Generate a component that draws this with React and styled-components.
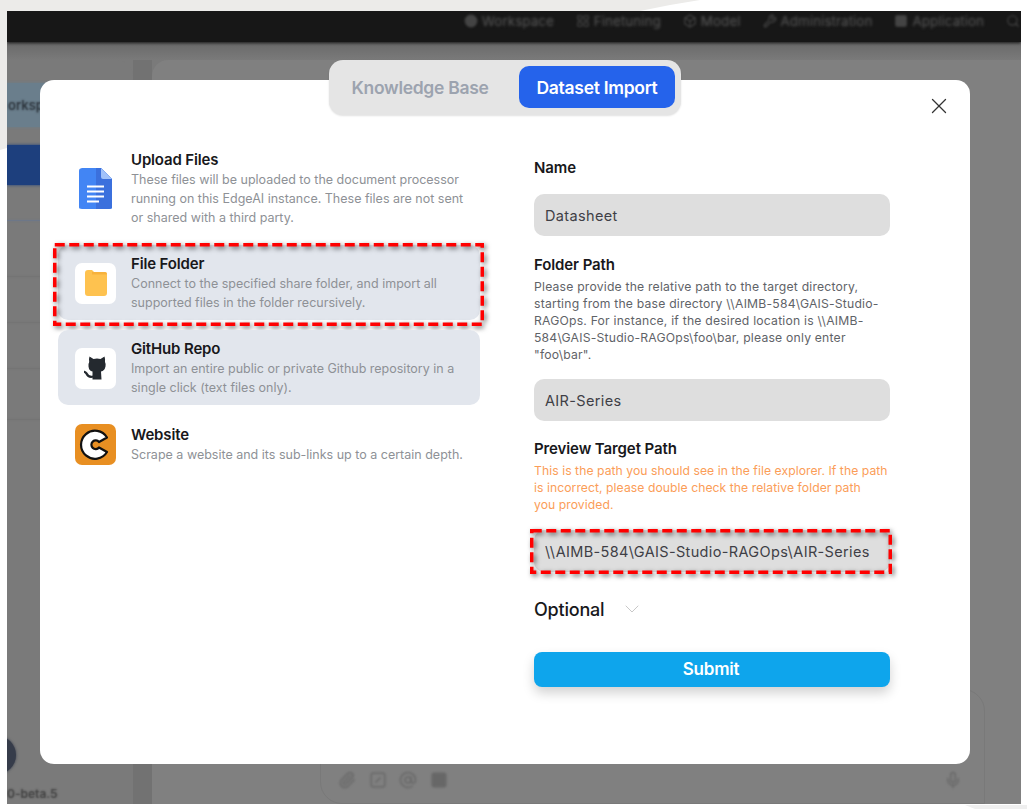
import React from 'react';
import styled, { createGlobalStyle } from 'styled-components';
import { X, ChevronDown, Search, LayoutGrid, Box, Wrench, Paperclip, SquareSlash, AtSign, Mic, Circle, Square } from 'lucide-react';

const GlobalStyle = createGlobalStyle`
    html, body {
        margin: 0;
        padding: 0;
        background: #fff;
        font-family: "Inter", "Liberation Sans", sans-serif;
    }
    * { box-sizing: border-box; }
`;

const Page = styled.div`
    position: relative;
    width: 1027px;
    height: 809px;
    padding: 11px 6px 5px 7px;
    overflow: hidden;
`;

// the torn grey paper behind the screenshot
const PaperScraps = styled.svg`
    position: absolute;
    left: 0;
    top: 0;
`;

const Frame = styled.div`
    position: relative;
    width: 1014px;
    height: 793px;
    overflow: hidden;
    background: #7f7f7f;
`;

// blurred page behind the dialog, the softness comes from shadows on each part
const Backdrop = styled.div`
    display: flex;
    flex-direction: column;
    height: 100%;
`;

const TopBar = styled.div`
    position: relative;
    flex: none;
    height: 31px;
    background: #171717;
    box-shadow: 0 1px 3px #171717;
    display: flex;
    justify-content: flex-end;
    align-items: flex-start;
    gap: 22px;
    padding: 2px 1px 0 0;
    font-size: 13.5px;
`;

const NavItem = styled.div`
    display: flex;
    align-items: center;
    gap: 4px;
    height: 16px;
    color: transparent;
    text-shadow: 0 0 3px #585858;
    svg { width: 14px; height: 14px; color: #444; filter: blur(1px); }
`;

const BackdropBody = styled.div`
    flex: 1;
    display: flex;
    background: linear-gradient(#696969 0, #7a7a7a 18px);
    min-height: 0;
`;

const Sidebar = styled.div`
    width: 126px;
    margin-top: 18px;
    border-top-right-radius: 16px;
    background: #7a7a7a;
    display: flex;
    flex-direction: column;
`;

const WorkspaceStrip = styled.div`
    height: 44px;
    margin-top: 23px;
    background: #6a7e8c;
    box-shadow: 0 0 3px #6a7e8c;
    color: transparent;
    text-shadow: 0 0 2px #2c343c;
    font-size: 13px;
    font-weight: 600;
    line-height: 44px;
    white-space: nowrap;
    padding-left: 1px;
`;

const BlueStrip = styled.div`
    height: 40px;
    margin-top: 18px;
    background: #1d3f7d;
    box-shadow: 0 0 3px #1d3f7d;
`;

const SideLine = styled.div`
    height: 1px;
    margin-top: ${p => p.$gap}px;
    background: ${p => p.$color || '#747474'};
    box-shadow: 0 0 2px ${p => p.$color || '#747474'};
`;

const SideFooter = styled.div`
    margin-top: auto;
    display: flex;
    flex-direction: column;
`;

const Avatar = styled.div`
    width: 38px;
    height: 38px;
    margin: 0 0 1px -29px;
    border-radius: 50%;
    background: #363c4a;
    box-shadow: 0 0 3px #363c4a;
`;

const Version = styled.div`
    height: 18px;
    margin-top: 11px;
    color: transparent;
    text-shadow: 0 0 2px #3f3f3f;
    font-size: 12px;
    font-weight: 600;
    line-height: 15px;
    white-space: nowrap;
`;

const Gutter = styled.div`
    width: 19px;
    margin-top: 18px;
    background: #727272;
`;

const MainPanel = styled.div`
    flex: 1;
    margin-top: 18px;
    border-top-left-radius: 16px;
    background: #808080;
    display: flex;
    justify-content: flex-end;
    align-items: flex-end;
    padding-right: 36px;
`;

const ChatBox = styled.div`
    width: 665px;
    height: 115px;
    border: 1px solid #797979;
    border-radius: 22px 22px 0 22px;
    display: flex;
    align-items: flex-end;
    gap: 12.5px;
    padding: 0 22px 14px 17px;
    color: #676767;
    svg { width: 18px; height: 18px; filter: blur(.8px); }
`;

const ChatSpacer = styled.div`
    flex: 1;
`;

const Modal = styled.div`
    position: absolute;
    left: 33px;
    top: 69px;
    width: 930px;
    height: 684px;
    background: #fff;
    border-radius: 14px;
    display: flex;
    gap: 54px;
    padding: 61px 0 0 18px;
`;

const TabPill = styled.div`
    position: absolute;
    left: 289px;
    top: -20px;
    width: 352px;
    height: 55px;
    padding: 6px;
    border-radius: 14px;
    background: #e5e5e5;
    box-shadow: 0 1px 2px rgba(0, 0, 0, .12);
    display: flex;
    justify-content: space-between;
`;

const Tab = styled.div`
    height: 42px;
    width: ${p => p.$active ? '156px' : '170px'};
    border-radius: 10px;
    background: ${p => p.$active ? '#2563eb' : 'transparent'};
    color: ${p => p.$active ? '#fff' : '#9ca3af'};
    font-size: 17.5px;
    font-weight: 600;
    letter-spacing: -.3px;
    display: flex;
    align-items: center;
    justify-content: center;
`;

const CloseButton = styled.div`
    position: absolute;
    right: 18px;
    top: 13px;
    width: 26px;
    height: 26px;
    color: #333;
    svg { display: block; }
`;

const SourceList = styled.div`
    width: 422px;
    display: flex;
    flex-direction: column;
    gap: 10px;
`;

const Source = styled.div`
    position: relative;
    display: flex;
    align-items: center;
    gap: 15px;
    padding: 9px 16px 8px 17px;
    border-radius: 10px;
    background: ${p => p.$active ? '#e2e6ed' : 'transparent'};
`;

const SourceIcon = styled.div`
    flex: none;
    width: 41px;
    height: 41px;
    border-radius: 7px;
    background: ${p => p.$bg || '#fff'};
    display: flex;
    align-items: center;
    justify-content: center;
    overflow: hidden;
`;

const SourceText = styled.div`
    flex: 1;
    min-width: 0;
`;

const SourceTitle = styled.div`
    color: #18181b;
    font-size: 15px;
    font-weight: 600;
    line-height: 20px;
    letter-spacing: -.15px;
`;

const SourceDesc = styled.div`
    color: #8e9196;
    font-size: 12.5px;
    line-height: 19px;
`;

const Form = styled.div`
    width: 356px;
    padding-top: 17px;
    display: flex;
    flex-direction: column;
`;

const FieldLabel = styled.div`
    margin-top: ${p => p.$top || 0}px;
    color: #18181b;
    font-size: 15px;
    font-weight: 600;
    line-height: 20px;
    letter-spacing: -.1px;
`;

const Help = styled.div`
    margin-top: ${p => p.$warn ? 3.5 : 2.5}px;
    color: ${p => p.$warn ? '#fb9d58' : '#5f6368'};
    font-size: 12.2px;
    line-height: 17px;
    letter-spacing: ${p => p.$warn ? .05 : .2}px;
`;

const TextField = styled.input`
    display: block;
    width: 100%;
    height: 42px;
    margin: ${p => p.$top}px 0 0;
    padding: 1px 11px 0;
    border: 0;
    outline: 0;
    border-radius: 10px;
    background: #dedede;
    color: #3f3f46;
    font-family: inherit;
    font-size: 14.5px;
    letter-spacing: .35px;
`;

const Annotated = styled.div`
    position: relative;
    margin-top: ${p => p.$top || 0}px;
`;

// red dashed marker somebody drew on top of the screenshot
const MarkerSvg = styled.svg`
    position: absolute;
    left: ${p => p.$l}px;
    top: ${p => p.$t}px;
    width: ${p => p.$w}px;
    height: ${p => p.$h}px;
    pointer-events: none;
    overflow: visible;
    filter: drop-shadow(2px 2px 2.5px rgba(0, 0, 0, .6));
`;

const Marker = ({ l, t, w, h }) => (
    <MarkerSvg $l={l} $t={t} $w={w} $h={h}>
        <rect x="1.75" y="1.75" width={w - 3.5} height={h - 3.5} fill="none" stroke="#f00" strokeWidth="3.5" strokeDasharray="10 4.5" />
    </MarkerSvg>
);

const OptionalRow = styled.div`
    display: flex;
    align-items: center;
    gap: 16px;
    margin-top: 24px;
    height: 26px;
    color: #18181b;
    font-size: 18px;
    font-weight: 500;
    letter-spacing: -.2px;
    svg { color: #c8c8c8; }
`;

const SubmitButton = styled.div`
    margin-top: 30px;
    height: 35px;
    padding: 0 2px 2px 0;
    border-radius: 8px;
    background: #0ea5ec;
    color: #fff;
    font-size: 17px;
    font-weight: 600;
    letter-spacing: -.2px;
    display: flex;
    align-items: center;
    justify-content: center;
    box-shadow: 0 6px 12px rgba(0, 0, 0, .18);
`;

const DocsIcon = () => (
    <svg width="33" height="42" viewBox="0 0 33 42">
        <path d="M3 0H22L33 11V39a3 3 0 0 1-3 3H3a3 3 0 0 1-3-3V3a3 3 0 0 1 3-3Z" fill="#4285f4" />
        <path d="M17 0H22L33 11V39a3 3 0 0 1-3 3H17Z" fill="#3b70dd" />
        <path d="M22 0L33 11H24a2 2 0 0 1-2-2Z" fill="#a1c2fa" />
        <path d="M8 18.5H25M8 23.5H25M8 28.5H25M8 33.5H20" stroke="#fff" strokeWidth="2" />
    </svg>
);

const FolderIcon = () => (
    <svg width="24" height="28" viewBox="0 0 24 28">
        <path d="M1 4a3 3 0 0 1 3-3h4l2 2h10a3 3 0 0 1 3 3v18a3 3 0 0 1-3 3H4a3 3 0 0 1-3-3Z" fill="#fec24f" />
        <path d="M8 3h13a2 2 0 0 1 2 2v.6H8Z" fill="#f7b23c" />
    </svg>
);

const GithubCatIcon = () => (
    <svg width="24" height="24" viewBox="1.5 0 24 24">
        <path d="M7 .5L11 3Q14.5 2.2 18 3L22 .5Q23 3.5 22.5 6Q23.6 8 23 10.5Q22 15 18.5 15.5L19 23.5H10V15.5Q6.5 15 6 10.5Q5.6 8 6.7 6Q6 3.5 7 .5Z" fill="#24292f" />
        <path d="M11 20.5Q6 22 4 17.5Q3 16 1.8 15.8" fill="none" stroke="#24292f" strokeWidth="2.3" strokeLinecap="round" />
    </svg>
);

const WebsiteIcon = () => (
    <svg width="41" height="41" viewBox="0 0 41 41">
        <path d="M32 13.5A14 14 0 1 0 32 28L24 23.5A4.3 4.3 0 1 1 24 18Z" fill="#fff" stroke="#111" strokeWidth="2.2" strokeLinejoin="round" />
    </svg>
);

const sources = [
    { title: 'Upload Files', desc: 'These files will be uploaded to the document processor running on this EdgeAI instance. These files are not sent or shared with a third party.', icon: <DocsIcon />, bg: 'transparent' },
    { title: 'File Folder', desc: 'Connect to the specified share folder, and import all supported files in the folder recursively.', icon: <FolderIcon />, active: true, marked: true },
    { title: 'GitHub Repo', desc: 'Import an entire public or private Github repository in a single click (text files only).', icon: <GithubCatIcon />, active: true },
    { title: 'Website', desc: 'Scrape a website and its sub-links up to a certain depth.', icon: <WebsiteIcon />, bg: '#e88f22' },
];

const App = () => {
    return (
        <Page>
            <GlobalStyle />
            <PaperScraps width="1027" height="809" viewBox="0 0 1027 809">
                <path d="M0 0H700L670 5L640 11H7V148L0 150Z" fill="#ecebe9" />
                <path d="M965 805H1027V809H975Z" fill="#efefef" />
            </PaperScraps>
            <Frame>
                <Backdrop>
                    <TopBar>
                        <NavItem><Circle fill="currentColor" />Workspace</NavItem>
                        <NavItem><LayoutGrid />Finetuning</NavItem>
                        <NavItem><Box />Model</NavItem>
                        <NavItem><Wrench />Administration</NavItem>
                        <NavItem><Square fill="currentColor" />Application</NavItem>
                        <NavItem><Search /></NavItem>
                    </TopBar>
                    <BackdropBody>
                        <Sidebar>
                            <WorkspaceStrip>orksp</WorkspaceStrip>
                            <BlueStrip />
                            <SideLine $gap={35} $color="#6d7788" />
                            <SideLine $gap={55} />
                            <SideLine $gap={45} />
                            <SideLine $gap={45} />
                            <SideLine $gap={50} />
                            <SideFooter>
                                <Avatar />
                                <Version>0-beta.5</Version>
                            </SideFooter>
                        </Sidebar>
                        <Gutter />
                        <MainPanel>
                            <ChatBox>
                                <Paperclip />
                                <SquareSlash />
                                <AtSign />
                                <Square fill="currentColor" />
                                <ChatSpacer />
                                <Mic />
                            </ChatBox>
                        </MainPanel>
                    </BackdropBody>
                </Backdrop>
                <Modal>
                    <TabPill>
                        <Tab>Knowledge Base</Tab>
                        <Tab $active>Dataset Import</Tab>
                    </TabPill>
                    <CloseButton><X size={26} strokeWidth={1.2} /></CloseButton>
                    <SourceList>
                        {sources.map(s => (
                            <Source key={s.title} $active={s.active}>
                                <SourceIcon $bg={s.bg}>{s.icon}</SourceIcon>
                                <SourceText>
                                    <SourceTitle>{s.title}</SourceTitle>
                                    <SourceDesc>{s.desc}</SourceDesc>
                                </SourceText>
                                {s.marked && <Marker l={-5} t={-2} w={431} h={83} />}
                            </Source>
                        ))}
                    </SourceList>
                    <Form>
                        <FieldLabel>Name</FieldLabel>
                        <TextField $top={16} readOnly value="Datasheet" />
                        <FieldLabel $top={19}>Folder Path</FieldLabel>
                        <Help>Please provide the relative path to the target directory, starting from the base directory \\AIMB-584\GAIS-Studio-RAGOps. For instance, if the desired location is \\AIMB-584\GAIS-Studio-RAGOps\foo\bar, please only enter "foo\bar".</Help>
                        <TextField $top={16} readOnly value="AIR-Series" />
                        <FieldLabel $top={18}>Preview Target Path</FieldLabel>
                        <Help $warn>This is the path you should see in the file explorer. If the path is incorrect, please double check the relative folder path<br />you provided.</Help>
                        <Annotated $top={17}>
                            <TextField $top={0} readOnly value="\\AIMB-584\GAIS-Studio-RAGOps\AIR-Series" />
                            <Marker l={-4} t={-1} w={362} h={45} />
                        </Annotated>
                        <OptionalRow>Optional<ChevronDown size={24} strokeWidth={1} /></OptionalRow>
                        <SubmitButton>Submit</SubmitButton>
                    </Form>
                </Modal>
            </Frame>
        </Page>
    );
};

export default App;
